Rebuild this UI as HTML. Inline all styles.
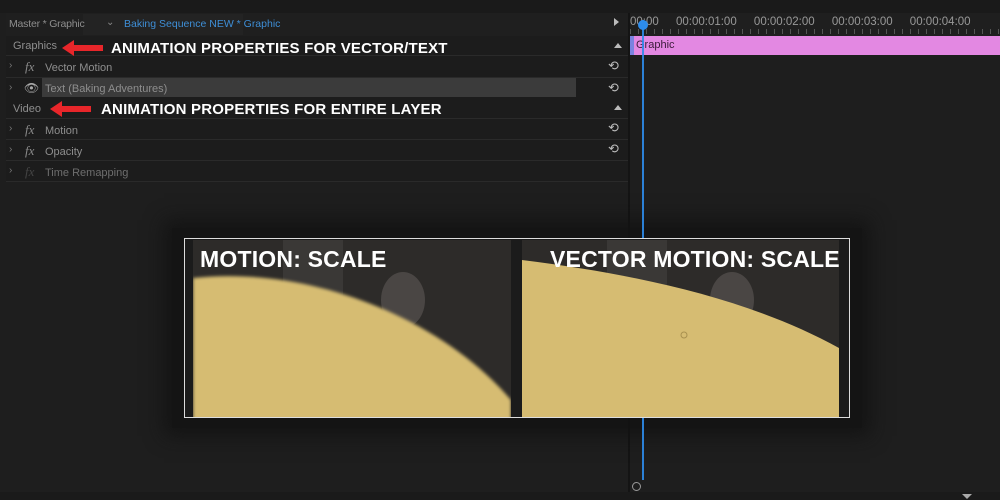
<!DOCTYPE html>
<html><head><style>
body{margin:0;width:1000px;height:500px;background:#1e1e1e;overflow:hidden;position:relative;font-family:"Liberation Sans",sans-serif;}
.a{position:absolute}
.row{position:absolute;left:6px;width:622px;border-bottom:1px solid #2a2a2a;background:#1c1c1c;color:#8e8e8e;font-size:11px}
.ann{position:absolute;color:#fff;font-weight:bold;font-size:15px;letter-spacing:0.2px;font-family:"Liberation Sans",sans-serif;white-space:nowrap}
.chev{position:absolute;left:3px;color:#777;font-size:10px}
.fx{position:absolute;left:19px;font-style:italic;font-family:"Liberation Serif",serif;font-size:13px;color:#8a8a8a}
.lbl{position:absolute;left:39px}
.rs{position:absolute;left:602px;color:#bbb;font-size:13px}
.up{position:absolute;left:608px;width:0;height:0;border-left:4px solid transparent;border-right:4px solid transparent;border-bottom:5px solid #bbb}
</style></head><body>
<div class="a" style="left:0;top:0;width:1000px;height:13px;background:#1a1a1a"></div>
<div class="a" style="left:6px;top:13px;width:622px;height:23px;background:#1f1f1f;border-bottom:1px solid #2c2c2c"></div>
<div class="a" style="left:83px;top:14px;width:160px;height:21px;background:#232323"></div>
<div class="a" style="left:9px;top:18px;font-size:10.5px;letter-spacing:-0.2px;color:#8e8e8e;white-space:nowrap">Master * Graphic</div>
<div class="a" style="left:106px;top:17px;font-size:10px;color:#888">⌄</div>
<div class="a" style="left:124px;top:18px;font-size:10.5px;color:#3e8ed6">Baking Sequence NEW * Graphic</div>
<div class="a" style="left:614px;top:18px;width:0;height:0;border-top:4px solid transparent;border-bottom:4px solid transparent;border-left:5px solid #bbb"></div>

<div class="row" style="top:36px;height:19px"><span class="lbl" style="left:7px;top:4px">Graphics</span><div class="up" style="top:7px"></div></div>
<div class="row" style="top:56px;height:21px"><span class="chev" style="top:4px">›</span><span class="fx" style="top:3px">fx</span><span class="lbl" style="top:6px">Vector Motion</span><span class="rs" style="top:2px">⟲</span></div>
<div class="row" style="top:78px;height:20px"><span class="chev" style="top:4px">›</span><span class="a" style="left:18px;top:3px;color:#aaa;font-size:12px">👁</span><div class="a" style="left:36px;top:0;width:534px;height:19px;background:#3b3b3b"></div><span class="lbl" style="top:5px">Text (Baking Adventures)</span><span class="rs" style="top:2px">⟲</span></div>
<div class="row" style="top:98px;height:20px"><span class="lbl" style="left:7px;top:5px">Video</span><div class="up" style="top:7px"></div></div>
<div class="row" style="top:119px;height:20px"><span class="chev" style="top:4px">›</span><span class="fx" style="top:3px">fx</span><span class="lbl" style="top:6px">Motion</span><span class="rs" style="top:1px">⟲</span></div>
<div class="row" style="top:140px;height:20px"><span class="chev" style="top:4px">›</span><span class="fx" style="top:3px">fx</span><span class="lbl" style="top:6px">Opacity</span><span class="rs" style="top:1px">⟲</span></div>
<div class="row" style="top:161px;height:20px;color:#6e6e6e"><span class="chev" style="top:4px">›</span><span class="fx" style="top:3px;color:#444">fx</span><span class="lbl" style="top:6px">Time Remapping</span></div>

<svg class="a" style="left:62px;top:40px" width="42" height="16"><polygon points="0,8 12,0 12,5 41,5 41,11 12,11 12,16" fill="#e8262a"/></svg>
<div class="ann" style="left:111px;top:40px">ANIMATION PROPERTIES FOR VECTOR/TEXT</div>
<svg class="a" style="left:50px;top:101px" width="42" height="16"><polygon points="0,8 12,0 12,5 41,5 41,11 12,11 12,16" fill="#e8262a"/></svg>
<div class="ann" style="left:101px;top:101px">ANIMATION PROPERTIES FOR ENTIRE LAYER</div>

<div class="a" style="left:628px;top:13px;width:2px;height:487px;background:#141414"></div>
<div class="a" style="left:630px;top:13px;width:370px;height:23px;background:#1f1f1f"></div>
<div class="a" style="left:630px;top:16px;font-size:11.5px;color:#999;word-spacing:14px;white-space:nowrap">00:00 00:00:01:00 00:00:02:00 00:00:03:00 00:00:04:00</div>
<div class="a" style="left:630px;top:29px;width:370px;height:5px;background:repeating-linear-gradient(90deg,#555 0 1px,transparent 1px 8px)"></div>
<div class="a" style="left:630px;top:36px;width:370px;height:19px;background:#e388e2"></div>
<div class="a" style="left:630px;top:36px;width:4px;height:19px;background:#7a83e0"></div>
<div class="a" style="left:636px;top:39px;font-size:11px;color:#3a1a3a">Graphic</div>

<div class="a" style="left:172px;top:228px;width:690px;height:200px;background:rgba(18,18,18,0.8);box-shadow:0 0 18px 8px rgba(18,18,18,0.8)"></div>
<div class="a" style="left:642px;top:20px;width:2px;height:460px;background:#2d8ceb;opacity:0.9"></div>
<div class="a" style="left:638px;top:20px;width:10px;height:10px;border-radius:50%;background:#2d8ceb"></div>
<div class="a" style="left:632px;top:482px;width:7px;height:7px;border:1px solid #999;border-radius:50%"></div>
<div class="a" style="left:0;top:492px;width:1000px;height:8px;background:#1a1a1a"></div>
<div class="a" style="left:962px;top:494px;width:0;height:0;border-left:5px solid transparent;border-right:5px solid transparent;border-top:5px solid #aaa"></div>

<div class="a" style="left:184px;top:238px;width:664px;height:178px;border:1px solid #ddd;background:#1b1b1b"></div>
<svg class="a" style="left:193px;top:240px" width="318" height="177">
<defs><filter id="b"><feGaussianBlur stdDeviation="1.5"/></filter></defs>
<rect width="318" height="177" fill="#2d2b29"/>
<rect x="90" y="0" width="60" height="60" fill="#3a3836"/>
<ellipse cx="210" cy="60" rx="22" ry="28" fill="#4a4644"/>
<path d="M0,38 C120,25 250,80 318,160 L318,180 L0,180 Z" fill="#d6bc72" filter="url(#b)"/>
</svg>
<svg class="a" style="left:522px;top:240px" width="317" height="177">
<rect width="317" height="177" fill="#2d2b29"/>
<rect x="85" y="0" width="60" height="60" fill="#3a3836"/>
<ellipse cx="210" cy="60" rx="22" ry="28" fill="#4a4644"/>
<path d="M0,20 C120,35 230,60 317,108 L317,177 L0,177 Z" fill="#d6bc72"/>
<circle cx="162" cy="95" r="3" fill="none" stroke="#a8904f"/>
</svg>
<div class="ann" style="left:200px;top:246px;font-size:23px">MOTION: SCALE</div>
<div class="ann" style="left:550px;top:246px;font-size:23px">VECTOR MOTION: SCALE</div>
</body></html>
